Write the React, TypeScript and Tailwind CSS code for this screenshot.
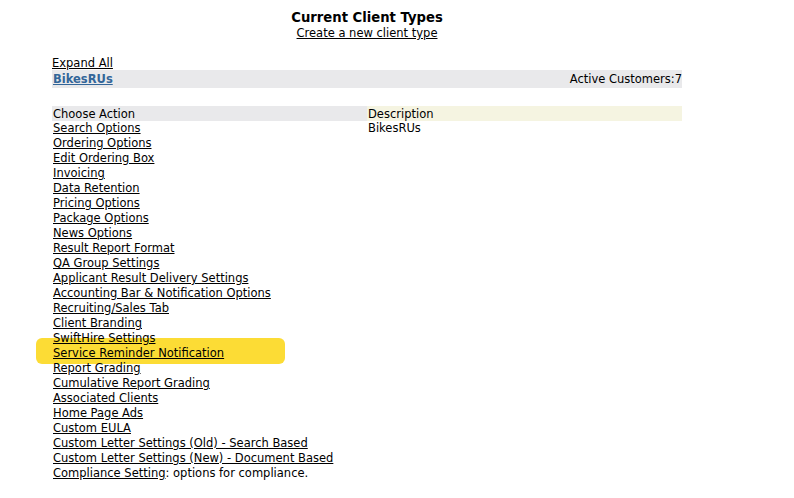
import React from "react";

const actions = [
  "Search Options",
  "Ordering Options",
  "Edit Ordering Box",
  "Invoicing",
  "Data Retention",
  "Pricing Options",
  "Package Options",
  "News Options",
  "Result Report Format",
  "QA Group Settings",
  "Applicant Result Delivery Settings",
  "Accounting Bar & Notification Options",
  "Recruiting/Sales Tab",
  "Client Branding",
  "SwiftHire Settings",
  "Service Reminder Notification",
  "Report Grading",
  "Cumulative Report Grading",
  "Associated Clients",
  "Home Page Ads",
  "Custom EULA",
  "Custom Letter Settings (Old) - Search Based",
  "Custom Letter Settings (New) - Document Based",
];

function App() {
  return (
    <div className="w-[794px] h-[498px] bg-white text-black text-[11.5px] leading-[15px] font-['DejaVu_Sans',Verdana,sans-serif] overflow-hidden">
      <div className="ml-[52px] w-[630px] flex flex-col items-center pt-[9px]">
        <h1 className="text-[13.2px] leading-[17px] font-bold">Current Client Types</h1>
        <a href="#" className="underline">Create a new client type</a>
      </div>

      <div className="ml-[52px] w-[630px] mt-[16px]">
        <a href="#" className="underline block leading-[13px]">Expand All</a>
        <div className="flex justify-between items-center bg-[#e9e9eb] h-[18px] pl-[1px] pr-0 pt-[1px]">
          <a href="#" className="font-bold underline text-[#336699]">BikesRUs</a>
          <span>Active Customers:7</span>
        </div>

        <div className="flex mt-[18px]">
          <div className="w-[315px] flex flex-col">
            <div className="bg-[#e9e9eb] px-[1px] h-[15px] pt-[1px] leading-[14px]">Choose Action</div>
            <div className="relative flex flex-col px-[1px]">
              <div className="absolute left-[-16px] top-[217px] w-[249px] h-[26px] rounded-[6px] bg-[#fcdc35]" />
              {actions.map((a) => (
                <a href="#" key={a} className="relative underline w-fit">{a}</a>
              ))}
              <span className="relative">
                <a href="#" className="underline">Compliance Setting</a>: options for compliance.
              </span>
            </div>
          </div>
          <div className="flex-1 flex flex-col">
            <div className="bg-[#f5f4e1] px-[1px] h-[15px] pt-[1px] leading-[14px]">Description</div>
            <div className="px-[1px]">BikesRUs</div>
          </div>
        </div>
      </div>
    </div>
  );
}

export default App;
